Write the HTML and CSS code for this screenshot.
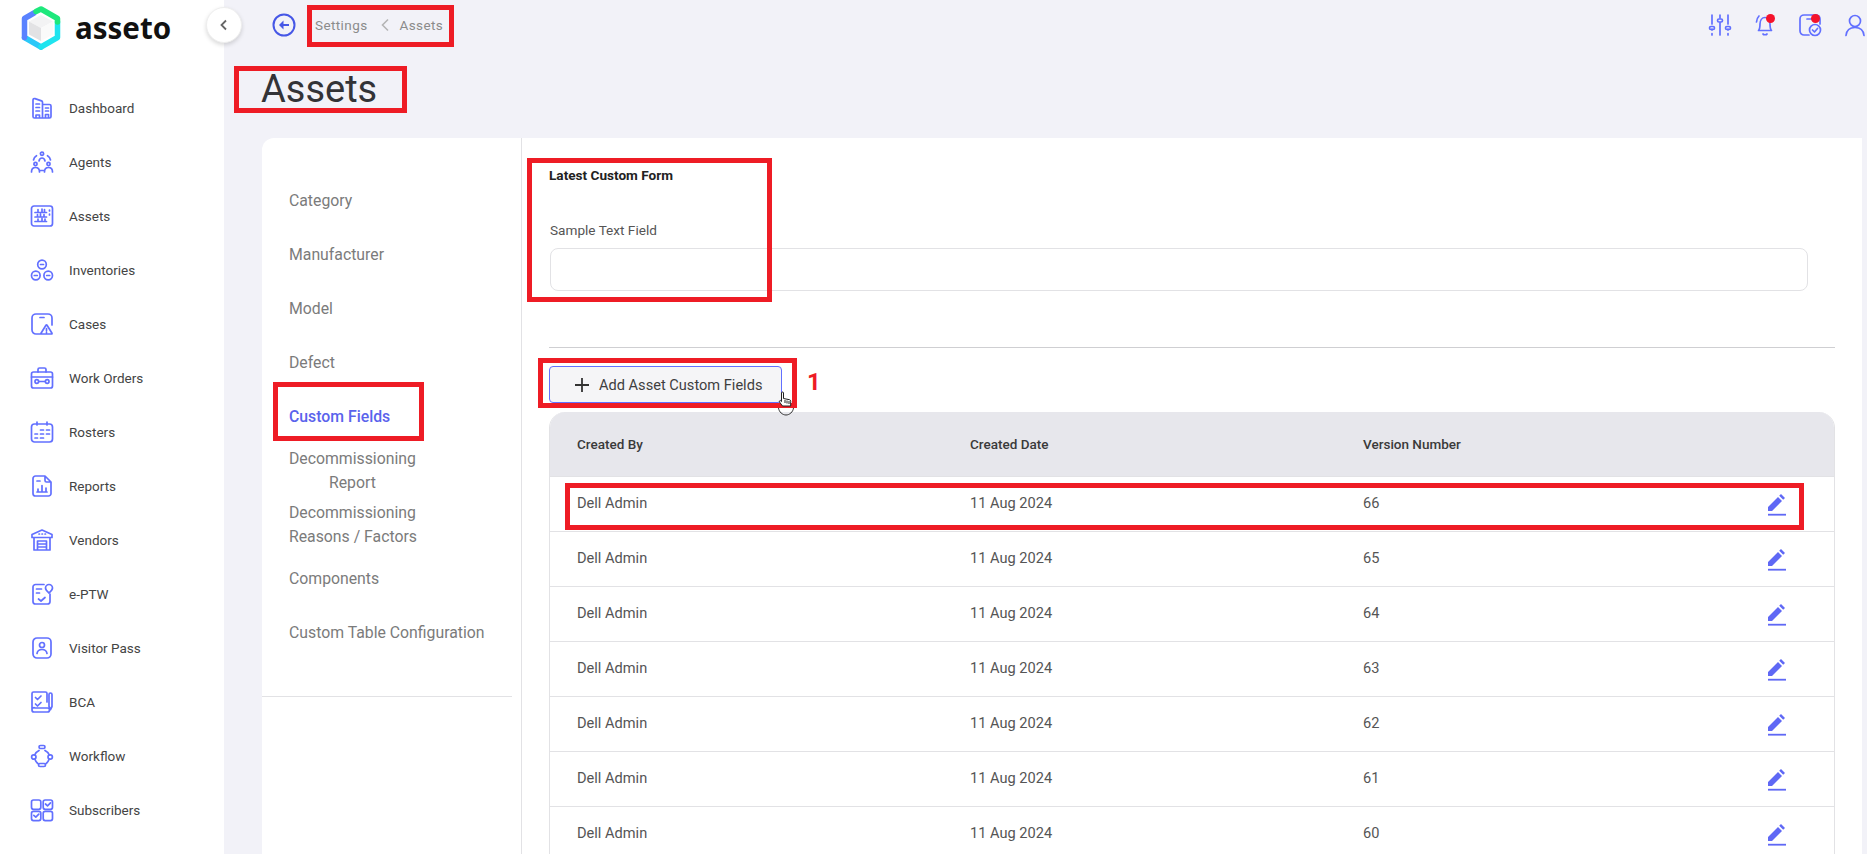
FILE: index.html
```html
<!DOCTYPE html>
<html lang="en">
<head>
<meta charset="UTF-8">
<meta name="viewport" content="width=device-width, initial-scale=1">
<title>asseto - Assets</title>
<link rel="stylesheet" href="styles.css">
</head>
<body>
<div class="app">

<aside class="sidebar">
    <div class="logo">
        <svg class="logo-mark" viewBox="0 0 40 44" width="40" height="44">
            <g fill="none" stroke-width="5.500" stroke-linecap="round" stroke-linejoin="round">
                <path d="M20 41 3.500 31.500" stroke="#2bc8f8"/>
                <path d="M3.500 31.500V12.500L13 7" stroke="#5a82ff"/>
                <path d="M36.500 16V31.500L20 41" stroke="#1fe4ef"/>
                <path d="M15 5.500 20 3 36.500 12.500V16" stroke="#1ee87c"/>
            </g>
            <path d="M20 9 32 15.500 20 22 8 15.500z" fill="#f3f3f4"/>
            <path d="M8 15.500 20 22V35L8 28.500z" fill="#e2e2e4"/>
            <path d="M32 15.500 20 22V35L32 28.500z" fill="#fafafa"/>
        </svg>
        <span class="logo-text">asseto</span>
    </div>
    <button class="collapse">
        <svg viewBox="0 0 12 12" width="12" height="12"><path d="M8 1.500 3.500 6 8 10.500" fill="none" stroke="#666" stroke-width="1.800"/></svg>
    </button>
    <nav class="nav">
        <a class="nav-item">
            <svg class="icon" viewBox="0 0 24 24"><path d="M3 20.500V4a1.500 1.500 0 0 1 2-1.400l6.500 2.300a1.500 1.500 0 0 1 1 1.400V22H4.500A1.500 1.500 0 0 1 3 20.500zM12.500 8.500h7A1.500 1.500 0 0 1 21 10v10.500a1.500 1.500 0 0 1-1.500 1.500h-7M6 8h3.500M6 11.500h3.500M6 15h3.500M15.500 12h3M15.500 15h3M6 22v-3h3.500v3M15.500 22v-3.500h3V22"/></svg>
            <span>Dashboard</span>
        </a>
        <a class="nav-item">
            <svg class="icon" viewBox="0 0 24 24"><circle cx="12" cy="3.800" r="1.600"/><circle cx="5.500" cy="14" r="1.600"/><circle cx="18.500" cy="14" r="1.600"/><path d="M1.500 22c0-3 1.500-4.500 4-4.500s4 1.500 4 4.500M14.500 22c0-3 1.500-4.500 4-4.500s4 1.500 4 4.500M9 11c.4-2 1.500-3 3-3s2.600 1 3 3M3.500 10c.3-1.800 1.300-3.300 3-4.300M20.500 10c-.3-1.800-1.300-3.300-3-4.300M10 20.500h4"/></svg>
            <span>Agents</span>
        </a>
        <a class="nav-item">
            <svg class="icon" viewBox="0 0 24 24"><rect x="1.500" y="2" width="21" height="20" rx="2.500"/><path d="M5 8.500h11.500M5 13h11.500M5 17.500h11.500M8 5.500v2M12 5v2.500M14.500 5.500v2M7.500 10.500v1.500M10.500 10v2M14 10.500v1.500M8 15v1.500M12 14.500v2M15 15v1.500M19.500 6v1M19.500 10v1"/></svg>
            <span>Assets</span>
        </a>
        <a class="nav-item">
            <svg class="icon" viewBox="0 0 24 24"><circle cx="12" cy="6.500" r="4.300"/><circle cx="5.800" cy="17.500" r="4.300"/><circle cx="18.200" cy="17.500" r="4.300"/><path d="M10.500 6.500h3M4.300 17.500h3M16.700 17.500h3"/></svg>
            <span>Inventories</span>
        </a>
        <a class="nav-item">
            <svg class="icon" viewBox="0 0 24 24"><path d="M10.500 22H6a4 4 0 0 1-4-4V6a4 4 0 0 1 4-4h12a4 4 0 0 1 4 4v7M10 5.500h4M15.800 13.500l-4.800 7.800a.5.500 0 0 0 .4.700h10.200a.5.500 0 0 0 .4-.700l-4.800-7.800a.5.500 0 0 0-1.400 0zM16.500 16.500v2.300M16.500 20.200v.3"/></svg>
            <span>Cases</span>
        </a>
        <a class="nav-item">
            <svg class="icon" viewBox="0 0 24 24"><rect x="1.500" y="6" width="21" height="16" rx="2"/><path d="M8 6V3.500A1.500 1.500 0 0 1 9.500 2h5A1.500 1.500 0 0 1 16 3.500V6M1.500 11h21M9 15.500h6"/><circle cx="6.800" cy="15.500" r="1.800"/><circle cx="17.200" cy="15.500" r="1.800"/></svg>
            <span>Work Orders</span>
        </a>
        <a class="nav-item">
            <svg class="icon" viewBox="0 0 24 24"><rect x="1.500" y="4" width="21" height="18" rx="3"/><path d="M7 2v3M17 2v3M10.500 10h3M16.500 10h3M5 14h2.500M10.500 14h3M16.500 14h3M5 18h2.500M10.500 18h3"/></svg>
            <span>Rosters</span>
        </a>
        <a class="nav-item">
            <svg class="icon" viewBox="0 0 24 24"><path d="M15 2H5.500A2.500 2.500 0 0 0 3 4.500v15A2.500 2.500 0 0 0 5.500 22h13a2.500 2.500 0 0 0 2.500-2.500V8zM15 2v4.500A1.500 1.500 0 0 0 16.500 8H21M7 18h10M8 15v3M12 11.500V18M16 14v4M7 7h3"/></svg>
            <span>Reports</span>
        </a>
        <a class="nav-item">
            <svg class="icon" viewBox="0 0 24 24"><path d="M2 6.500 12 2l10 4.500V9.500H2zM4 9.500V22h16V9.500M7.500 13h9v9h-9zM7.500 16h9M7.500 19h9M9 6h.5M12 6h.5M15 6h.5"/></svg>
            <span>Vendors</span>
        </a>
        <a class="nav-item">
            <svg class="icon" viewBox="0 0 24 24"><path d="M14 2.500H5.500A2.500 2.500 0 0 0 3 5v14.500A2.500 2.500 0 0 0 5.500 22h12a2.500 2.500 0 0 0 2.500-2.500V12M6.500 7h5M6.500 11h3M8.500 17l2.500 2 4-3.500"/><path d="M19 11c-2-1.800-3.500-3-3.500-5a3.500 3.500 0 0 1 7 0c0 2-1.500 3.200-3.500 5z"/></svg>
            <span>e-PTW</span>
        </a>
        <a class="nav-item">
            <svg class="icon" viewBox="0 0 24 24"><rect x="3" y="2" width="18" height="20" rx="4"/><circle cx="12" cy="9" r="2.500"/><path d="M7 17.500c.4-2.500 2.400-4 5-4s4.600 1.500 5 4"/></svg>
            <span>Visitor Pass</span>
        </a>
        <a class="nav-item">
            <svg class="icon" viewBox="0 0 24 24"><path d="M17 12V3.500A1.500 1.500 0 0 0 15.500 2H3.500A1.500 1.500 0 0 0 2 3.500V20a2 2 0 0 0 2 2h13.500a1.500 1.500 0 0 0 0-4H5a2 2 0 0 0-3 2M5.500 7.500l2 2 3.500-3.500M5.500 14l2 2 3.500-3.500M19 4.500a1.500 1.500 0 0 1 3 0v12l-1.500 3-1.500-3z"/></svg>
            <span>BCA</span>
        </a>
        <a class="nav-item">
            <svg class="icon" viewBox="0 0 24 24"><rect x="9" y="1.500" width="6" height="3" rx="1.500"/><circle cx="3.800" cy="13" r="2.200"/><circle cx="20.200" cy="13" r="2.200"/><rect x="8.500" y="19.500" width="7" height="3" rx="1.500"/><path d="M9 6.500C7 7.500 5.500 8.800 4.800 10.800M15 6.500c2 1 3.500 2.300 4.200 4.300M5 15.500c.7 2 2 3.300 3 4.200M19 15.500c-.7 2-2 3.300-3 4.200"/></svg>
            <span>Workflow</span>
        </a>
        <a class="nav-item">
            <svg class="icon" viewBox="0 0 24 24"><rect x="1.500" y="2" width="9.300" height="9.300" rx="2"/><rect x="13.200" y="2" width="9.300" height="9.300" rx="2"/><rect x="1.500" y="13.300" width="9.300" height="9.300" rx="2"/><rect x="13.200" y="13.300" width="9.300" height="9.300" rx="2"/><path d="M15.500 6l2 1.800 3-3M3.800 17.300l2 1.800 3-3"/></svg>
            <span>Subscribers</span>
        </a>
    </nav>
</aside>

<main class="main">
    <header class="topbar">
        <div class="crumbs">
            <svg class="back" viewBox="0 0 24 24"><circle cx="12" cy="12" r="10.500"/><path d="M17 12H9"/><path class="back-head" d="M11.500 7.500 7 12l4.500 4.500z"/></svg>
            <span class="crumb">Settings</span>
            <svg class="crumb-sep" viewBox="0 0 10 14"><path d="M8 1.500 2.500 7 8 12.500"/></svg>
            <span class="crumb">Assets</span>
        </div>
        <div class="top-icons">
            <svg class="icon" viewBox="0 0 24 24"><path d="M4 2v9M4 16v1M4 20.500V22M12 2v3M12 9.500V22M20 2v9M20 16v1M20 20.500V22"/><rect x="1.500" y="13.500" width="5" height="3" rx="1.500"/><rect x="9.500" y="6" width="5" height="3" rx="1.500"/><rect x="17.500" y="13.500" width="5" height="3" rx="1.500"/></svg>
            <span class="alert">
                <svg class="icon" viewBox="0 0 24 24"><path d="M5.500 17.500c1.500-1.500 1.500-3 1.500-6.500s2-6.500 5-6.500 5 3 5 6.500 0 5 1.500 6.500zM10 21c.5 1 3.500 1 4 0M3.500 9c.2-2.500 1-4.500 2.500-6"/></svg>
                <i class="dot"></i>
            </span>
            <span class="alert">
                <svg class="icon" viewBox="0 0 24 24"><path d="M11 22H6a4 4 0 0 1-4-4V6a4 4 0 0 1 4-4h12a4 4 0 0 1 4 4v5M9 6h5"/><circle cx="17" cy="17" r="5.500"/><path d="M14.500 17l2 2 3-3.500"/></svg>
                <i class="dot"></i>
            </span>
            <svg class="icon" viewBox="0 0 24 24"><circle cx="12" cy="8" r="5.500"/><path d="M3 22.500c.5-5 4-8 9-8s8.500 3 9 8"/></svg>
        </div>
    </header>

    <h1 class="page-title">Assets</h1>

    <section class="card">
        <div class="side-col">
            <ul class="side-menu">
                <li>Category</li>
                <li>Manufacturer</li>
                <li>Model</li>
                <li>Defect</li>
                <li class="active">Custom Fields</li>
                <li class="centered">Decommissioning<br>Report</li>
                <li>Decommissioning<br>Reasons / Factors</li>
                <li>Components</li>
                <li>Custom Table Configuration</li>
            </ul>
        </div>
        <div class="content">
            <h2 class="form-title">Latest Custom Form</h2>
            <label class="field-label">Sample Text Field</label>
            <input class="field" type="text">
            <hr class="rule">
            <button class="add-btn">
                <svg viewBox="0 0 14 14" width="14" height="14"><path d="M7 0v14M0 7h14" stroke="#333" stroke-width="1.800"/></svg>
                Add Asset Custom Fields
            </button>
            <div class="table-wrap">
                <table class="versions">
                    <thead>
                        <tr><th>Created By</th><th>Created Date</th><th>Version Number</th><th></th></tr>
                    </thead>
                    <tbody>
                        <tr><td>Dell Admin</td><td>11 Aug 2024</td><td>66</td><td class="edit"><svg viewBox="0 0 18 23" width="18" height="23"><path d="M0 14 10 4l4 4L4 18H0zM11.200 2.800 13 1l4 4-1.800 1.800z"/><rect y="20.800" width="18" height="1.800"/></svg></td></tr>
                        <tr><td>Dell Admin</td><td>11 Aug 2024</td><td>65</td><td class="edit"><svg viewBox="0 0 18 23" width="18" height="23"><path d="M0 14 10 4l4 4L4 18H0zM11.200 2.800 13 1l4 4-1.800 1.800z"/><rect y="20.800" width="18" height="1.800"/></svg></td></tr>
                        <tr><td>Dell Admin</td><td>11 Aug 2024</td><td>64</td><td class="edit"><svg viewBox="0 0 18 23" width="18" height="23"><path d="M0 14 10 4l4 4L4 18H0zM11.200 2.800 13 1l4 4-1.800 1.800z"/><rect y="20.800" width="18" height="1.800"/></svg></td></tr>
                        <tr><td>Dell Admin</td><td>11 Aug 2024</td><td>63</td><td class="edit"><svg viewBox="0 0 18 23" width="18" height="23"><path d="M0 14 10 4l4 4L4 18H0zM11.200 2.800 13 1l4 4-1.800 1.800z"/><rect y="20.800" width="18" height="1.800"/></svg></td></tr>
                        <tr><td>Dell Admin</td><td>11 Aug 2024</td><td>62</td><td class="edit"><svg viewBox="0 0 18 23" width="18" height="23"><path d="M0 14 10 4l4 4L4 18H0zM11.200 2.800 13 1l4 4-1.800 1.800z"/><rect y="20.800" width="18" height="1.800"/></svg></td></tr>
                        <tr><td>Dell Admin</td><td>11 Aug 2024</td><td>61</td><td class="edit"><svg viewBox="0 0 18 23" width="18" height="23"><path d="M0 14 10 4l4 4L4 18H0zM11.200 2.800 13 1l4 4-1.800 1.800z"/><rect y="20.800" width="18" height="1.800"/></svg></td></tr>
                        <tr><td>Dell Admin</td><td>11 Aug 2024</td><td>60</td><td class="edit"><svg viewBox="0 0 18 23" width="18" height="23"><path d="M0 14 10 4l4 4L4 18H0zM11.200 2.800 13 1l4 4-1.800 1.800z"/><rect y="20.800" width="18" height="1.800"/></svg></td></tr>
                    </tbody>
                </table>
            </div>
        </div>
    </section>
</main>

</div>

<!-- red boxes drawn over the screenshot -->
<div class="mark mark-crumbs"></div>
<div class="mark mark-title"></div>
<div class="mark mark-form"></div>
<div class="mark mark-button"></div>
<div class="mark mark-menu"></div>
<div class="mark mark-row"></div>
<span class="step">1</span>
<svg class="hand" viewBox="0 0 16 25" width="16" height="25">
    <path d="M3.500 2a1 1 0 0 1 2 0v5.500l6 1.200c.8.200 1.200.700 1.200 1.500V15H4.500L1.500 11c-.5-1 .5-1.800 1.200-1.200l.8.800zM7 9v3M9 9.500v3M11 10v3" fill="#fff" stroke="#222" stroke-width="1"/>
    <path d="M.5 17c.5 4 4 7 7.500 7s7-3 7.500-7" fill="none" stroke="#333" stroke-width="1"/>
</svg>
</body>
</html>
```

FILE: styles.css
```css
:root {
    --page-bg: #f2f2f8;
    --icon: #6270ff;
    --line: #e2e2e5;
    --red: #ee1c25;
}

* {
    box-sizing: border-box;
}

html, body {
    height: 100%;
}

body {
    margin: 0;
    overflow: hidden;
    position: relative;
    background: var(--page-bg);
    font-family: Roboto, 'Liberation Sans', sans-serif;
    color: #444;
}

.app {
    display: flex;
    height: 854px;
}

/* sidebar */
.sidebar {
    width: 224px;
    flex-shrink: 0;
    background: #fff;
    position: relative;
}

.logo {
    height: 81px;
    padding: 6px 0 0 21px;
    display: flex;
    align-items: flex-start;
    gap: 14px;
}

.logo-text {
    font-family: 'Noto Sans', sans-serif;
    font-weight: 700;
    font-size: 29.5px;
    line-height: 44px;
    color: #111;
}

.collapse {
    position: absolute;
    top: 7px;
    right: -18px;
    width: 36px;
    height: 36px;
    padding: 0;
    border: 1px solid #eee;
    border-radius: 50%;
    background: #fff;
    box-shadow: 0 2px 4px rgba(0,0,0,0.15);
    display: flex;
    align-items: center;
    justify-content: center;
}

.nav-item {
    height: 54px;
    padding-left: 30px;
    display: flex;
    align-items: center;
    gap: 15px;
    font-size: 13.5px;
    color: #444;
}

.icon {
    width: 24px;
    height: 24px;
    fill: none;
    stroke: var(--icon);
    stroke-width: 1.7;
    stroke-linecap: round;
    stroke-linejoin: round;
    flex-shrink: 0;
}

/* top bar */
.main {
    flex: 1;
    min-width: 0;
    display: flex;
    flex-direction: column;
}

.topbar {
    height: 50px;
    padding: 0 0 0 48px;
    display: flex;
    align-items: center;
    justify-content: space-between;
    flex-shrink: 0;
}

.crumbs {
    display: flex;
    align-items: center;
}

.back {
    width: 24px;
    height: 24px;
    margin-right: 19px;
    fill: none;
    stroke: #4657e6;
    stroke-width: 2;
}

.back-head {
    fill: #4657e6;
    stroke: none;
}

.crumb {
    font-size: 13.5px;
    letter-spacing: 0.4px;
    color: #8b8b8b;
}

.crumb-sep {
    width: 10px;
    height: 14px;
    margin: 0 10px 0 12px;
    fill: none;
    stroke: #b5b5b5;
    stroke-width: 1.6;
}

.top-icons {
    display: flex;
    align-items: center;
    gap: 21px;
}

.alert {
    position: relative;
    display: flex;
}

.dot {
    position: absolute;
    top: 1px;
    right: 2px;
    width: 9px;
    height: 9px;
    border-radius: 50%;
    background: #f5132b;
}

.page-title {
    margin: 0;
    height: 88px;
    padding: 15px 0 0 37px;
    font-size: 38px;
    line-height: 48px;
    font-weight: 400;
    color: #333337;
    flex-shrink: 0;
}

/* card */
.card {
    flex: 1;
    min-height: 0;
    margin: 0 5px 0 38px;
    background: #fff;
    border-radius: 12px 0 0 0;
    display: flex;
}

.side-col {
    width: 260px;
    flex-shrink: 0;
    border-right: 1px solid var(--line);
}

.side-menu {
    list-style: none;
    margin: 0;
    padding: 36px 0 36px;
    width: 250px;
    border-bottom: 1px solid var(--line);
}

.side-menu li {
    height: 54px;
    padding-left: 27px;
    display: flex;
    align-items: center;
    font-size: 15.8px;
    line-height: 24px;
    color: #7b7b7b;
}

.side-menu li.active {
    color: #5a63ec;
    font-weight: 500;
}

.side-menu li.centered {
    text-align: center;
}

.content {
    flex: 1;
    min-width: 0;
    padding: 28px 27px 0 27px;
}

.form-title {
    margin: 0 0 37px;
    font-size: 13.6px;
    line-height: 18px;
    font-weight: 700;
    color: #222;
}

.field-label {
    display: block;
    margin: 0 0 9px 1px;
    font-size: 13.6px;
    line-height: 18px;
    color: #555;
}

.field {
    display: block;
    width: 1258px;
    height: 43px;
    margin-left: 1px;
    border: 1px solid var(--line);
    border-radius: 8px;
    background: #fff;
}

.rule {
    margin: 56px 0 18px;
    border: 0;
    border-top: 1px solid #cfcfd2;
}

.add-btn {
    width: 233px;
    height: 37px;
    padding: 0 0 0 25px;
    display: flex;
    align-items: center;
    gap: 10px;
    background: #f5f5f7;
    border: 1px solid var(--icon);
    border-radius: 4px;
    font-family: inherit;
    font-size: 14.6px;
    font-weight: 400;
    color: #3f3f3f;
}

.table-wrap {
    margin-top: 9px;
    border: solid var(--line);
    border-width: 0 1px;
    border-radius: 16px 16px 0 0;
    overflow: hidden;
}

.versions {
    width: 100%;
    border-collapse: collapse;
    table-layout: fixed;
}

.versions th {
    height: 64px;
    padding: 0 0 0 27px;
    width: 393px;
    background: #e7e7ec;
    text-align: left;
    font-size: 13.5px;
    font-weight: 500;
    color: #3a3a3a;
}

.versions th:last-child {
    width: auto;
}

.versions td {
    height: 55px;
    padding: 0 0 2px 27px;
    border-top: 1px solid var(--line);
    font-size: 14.6px;
    color: #555;
}

.versions td.edit {
    padding: 1px 0 0 39px;
    line-height: 0;
}

.edit svg {
    fill: #5f68f5;
}

/* annotations */
.mark {
    position: absolute;
    border: 5px solid var(--red);
    pointer-events: none;
}

.mark-crumbs {
    left: 307px;
    top: 5px;
    width: 147px;
    height: 42px;
}

.mark-title {
    left: 234px;
    top: 66px;
    width: 173px;
    height: 47px;
}

.mark-form {
    left: 527px;
    top: 158px;
    width: 245px;
    height: 144px;
}

.mark-button {
    left: 538px;
    top: 358px;
    width: 259px;
    height: 50px;
}

.mark-menu {
    left: 273px;
    top: 382px;
    width: 151px;
    height: 59px;
}

.mark-row {
    left: 565px;
    top: 483px;
    width: 1239px;
    height: 47px;
}

.step {
    position: absolute;
    left: 807px;
    top: 369px;
    font-size: 24px;
    line-height: 26px;
    font-weight: 700;
    color: var(--red);
}

.hand {
    position: absolute;
    left: 778px;
    top: 391px;
}
```
